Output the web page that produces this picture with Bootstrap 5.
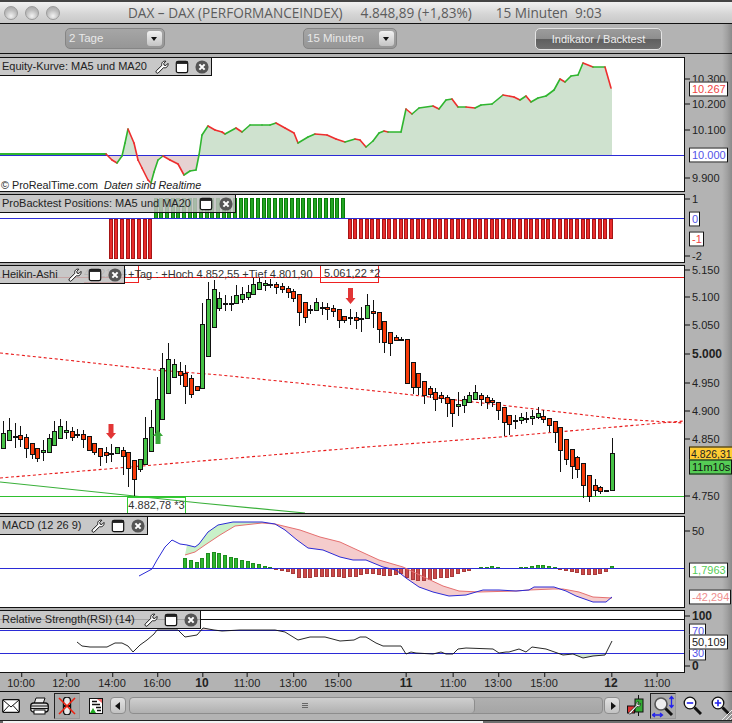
<!DOCTYPE html>
<html lang="de">
<head>
<meta charset="utf-8">
<title>DAX</title>
<link href="https://cdn.jsdelivr.net/npm/bootstrap@5.3.0/dist/css/bootstrap.min.css" rel="stylesheet">
<style>
html,body{margin:0;height:723px;overflow:hidden;background:#b3b3b3;font-family:"Liberation Sans",Arial,sans-serif;color:#222}
.app-window{width:732px;height:723px;background:linear-gradient(90deg,#b3b3b3 0,#b3b3b3 722px,#a2a2a2 727px,#8a8a8a 732px)}
.title-strip{height:24px;border-top:2px solid #444;border-bottom:1px solid #111;background:linear-gradient(#f1f1f1,#d4d4d4 60%,#c8c8c8);flex:none;position:relative}
.lights{position:absolute;left:4px;top:4px;gap:7px}
.light{width:14px;height:14px;border-radius:50%;border:1px solid #9b9b9b;background:radial-gradient(circle at 50% 75%,#f2f2f2,#bdbdbd 55%,#a3a3a3)}
.title-text{padding-left:128px;font:13.6px/21px "Open Sans",sans-serif;color:#5c5c5c;white-space:nowrap}
.title-gap-a{margin-left:18px}.title-gap-b{margin-left:24px}.title-gap-c{margin-left:7px}
.top-bar{height:30px;flex:none;border-bottom:1px solid #111;position:relative;margin-bottom:3px}
.drop{position:absolute;top:4px;height:21px;border:1px solid #858585;border-radius:5px;background:linear-gradient(#a6a6a6,#969696);color:#e8e8e8;font-size:11.5px;line-height:19px;padding-left:3px}
.drop-a{left:65px;width:100px}
.drop-b{left:303px;width:94px}
.drop-btn{position:absolute;right:2px;top:2px;width:15px;height:15px;border-radius:3px;background:linear-gradient(#f2f2f2,#c4c4c4)}
.drop-btn::after{content:"";position:absolute;left:4px;top:6px;border:3px solid transparent;border-top:4px solid #111;border-bottom:0}
.run-btn{position:absolute;left:535px;top:4px;width:127px;height:22px;padding:0;border:1px solid #e4e4e4;border-radius:5px;background:linear-gradient(#9c9c9c 0,#8e8e8e 50%,#5f5f5f 52%,#6f6f6f);color:#eee;font-size:11px;line-height:18px}
.run-btn:hover{background:#777;color:#fff;border-color:#e4e4e4}
.pane{flex:none;margin-bottom:2px}
.pane-a{height:135px}.pane-b{height:69px}.pane-c{height:249px}.pane-d{height:92px}.pane-e{height:63px}
.plot{width:685px;height:100%;position:relative;background:#fff;border:1px solid #111;border-left:0;overflow:hidden;flex:none}
.plot svg{display:block;width:684px;height:100%}
.scale-col{width:47px;position:relative;flex:none}
.tick,.tag{position:absolute;white-space:nowrap;transform:translateY(-50%);font-size:11px;line-height:13px}
.tick{left:7px;color:#222}
.tick::before{content:"";position:absolute;left:-7px;top:6px;width:5px;height:1px;background:#111}
.tick-strong{font-weight:700;font-size:12px}
.tag{left:4px;background:#fff;border:1px solid #111;padding:0 1px 0 2px;height:15px}
.tag-blue{color:#5353e8}.tag-red{color:#f04545}.tag-green{color:#55cc55}.tag-pink{color:#ef8f8f}
.tag-gold{background:#ffcc33;color:#222;padding:0 0 0 1px;font-size:10.4px;width:44px}.tag-time{background:#55cc55;color:#111}
.head{position:absolute;left:0;top:0;height:18px;border:1px solid #111;border-left:0;border-top:0;background:rgba(190,190,190,.85);font-size:11px;line-height:17px;padding:0 2px;gap:6px;z-index:3;white-space:nowrap;color:#222}
.head svg{width:14px;height:14px;flex:none}
.head-txt{flex:1}
.head-a{width:212px}.head-b{width:236px}.head-c{width:125px}.head-d{width:148px}.head-e{width:201px}
.note{position:absolute;font-size:11px;line-height:14px;white-space:nowrap;color:#333}
.copy-note{left:1px;top:120px;font-size:10.8px;color:#222}
.copy-note i{margin-left:3px}
.ha-box{position:absolute;top:-1px;height:18px;border:1px solid #e22;border-top:0;font-size:11px;line-height:16px;white-space:nowrap;color:#333;padding-left:3px}
.ha-box-a{left:84px;width:55px;border-left:0;padding:0;overflow:hidden;color:#888}
.ha-box-b{left:320px;width:59px}
.ha-stats{left:128px;top:1px}
.low-box{position:absolute;left:127px;top:231px;width:59px;height:17px;border:1px solid #3c3;border-bottom:0;font-size:11px;line-height:15px;text-align:center;white-space:nowrap;color:#333}
.time-axis{height:18px;flex:none;position:relative;border-bottom:1px solid #111;margin-top:-2px;box-sizing:content-box}
.when{position:absolute;top:3px;transform:translateX(-50%);font-size:11px;line-height:14px;color:#222}
.when::before{content:"";position:absolute;left:50%;top:-3px;width:1px;height:4px;background:#111}
.when-strong{font-weight:700;font-size:12px}
.bottom-bar{height:29px;flex:none;position:relative;border-bottom:1px solid #222;gap:0}
.bar-ico{position:absolute;top:4px}
.bar-sel{position:absolute;top:1px;width:26px;height:26px;background:#aaa;border:1px solid #999;border-top-color:#222;border-left-color:#222;padding:3px}
.scroll-btn{position:absolute;top:5px;width:16px;height:17px;border:1px solid #8d8d8d;border-radius:4px;background:linear-gradient(#e2e2e2,#c2c2c2)}
.scroll-btn::after{content:"";position:absolute;top:4px;left:4px;border:4px solid transparent}
.scroll-l{left:110px}.scroll-l::after{border-right:5px solid #111;border-left:0}
.scroll-r{left:604px}.scroll-r::after{border-left:5px solid #111;border-right:0;left:6px}
.track{position:absolute;left:129px;top:5px;width:474px;height:17px;border:1px solid #8d8d8d;border-radius:4px;background:linear-gradient(#b0b0b0,#a5a5a5)}
.thumb{height:100%;width:73%;border-right:1px solid #8d8d8d;border-radius:4px;background:linear-gradient(#cfcfcf,#b0b0b0);position:relative}
.thumb::after{content:"";position:absolute;left:172px;top:5px;width:6px;height:5px;border-top:1px solid #666;border-bottom:1px solid #666;background:linear-gradient(transparent 40%,#666 40%,#666 60%,transparent 60%)}
.foot-strip{height:3px;flex:none;background:linear-gradient(90deg,#666 0,#666 3px,#f2f2f2 3px,#f2f2f2 483px,#6e6e6e 483px)}
</style>
</head>
<body>
<svg width="0" height="0" class="position-absolute">
  <symbol id="ico-wrench" viewBox="0 0 16 16"><path d="M1.3 12.6 7.8 6.2C7 3.2 9.2.7 12.4 1.4L10 3.9l.4 2 2 .4 2.4-2.4c.8 3.2-2 5.8-5 4.8l-6.2 6.2c-.9.9-3.2-.7-2.3-2.3Z" fill="#fff" stroke="#111" stroke-width="1.1"/></symbol>
  <symbol id="ico-win" viewBox="0 0 16 16"><rect x="1.5" y="1.5" width="13" height="13" rx="2" fill="#fff" stroke="#111" stroke-width="1.4"/><rect x="1.5" y="1.5" width="13" height="3" fill="#222"/></symbol>
  <symbol id="ico-close" viewBox="0 0 16 16"><circle cx="8" cy="8" r="7.5" fill="#555"/><path d="M5 5l6 6M11 5l-6 6" stroke="#fff" stroke-width="2.4"/></symbol>
</svg>
<div class="app-window d-flex flex-column">
  <div class="title-strip">
    <div class="lights d-flex"><span class="light"></span><span class="light"></span><span class="light"></span></div>
    <div class="title-text"><span>DAX – DAX (PERFORMANCEINDEX)</span><span class="title-gap-a">4.848,89 (+1,83%)</span><span class="title-gap-b">15 Minuten</span><span class="title-gap-c">9:03</span></div>
  </div>
  <div class="top-bar">
    <div class="drop drop-a">2 Tage<span class="drop-btn"></span></div>
    <div class="drop drop-b">15 Minuten<span class="drop-btn"></span></div>
    <button type="button" class="btn run-btn">Indikator / Backtest</button>
  </div>

  <div class="pane pane-a d-flex">
    <div class="plot">
      <svg id="chart-eq" viewBox="0 58 684 133" preserveAspectRatio="none"></svg>
      <div class="head head-a d-flex align-items-center"><span class="head-txt">Equity-Kurve: MA5 und MA20</span><svg><use href="#ico-wrench"/></svg><svg><use href="#ico-win"/></svg><svg><use href="#ico-close"/></svg></div>
      <div class="note copy-note">© ProRealTime.com <i>Daten sind Realtime</i></div>
    </div>
    <div class="scale-col">
      <span class="tick" style="top:22px">10.300</span>
      <span class="tick" style="top:47px">10.200</span>
      <span class="tick" style="top:73px">10.100</span>
      <span class="tick" style="top:121px">9.900</span>
      <span class="tag tag-red" style="top:32px">10.267</span>
      <span class="tag tag-blue" style="top:98px">10.000</span>
    </div>
  </div>

  <div class="pane pane-b d-flex">
    <div class="plot">
      <svg id="chart-pos" viewBox="0 195 684 67" preserveAspectRatio="none"></svg>
      <div class="head head-b d-flex align-items-center"><span class="head-txt">ProBacktest Positions: MA5 und MA20</span><svg><use href="#ico-win"/></svg><svg><use href="#ico-close"/></svg></div>
    </div>
    <div class="scale-col">
      <span class="tick" style="top:5px">1</span>
      <span class="tick" style="top:62px">-2</span>
      <span class="tag tag-blue" style="top:25px">0</span>
      <span class="tag tag-red" style="top:45px">-1</span>
    </div>
  </div>

  <div class="pane pane-c d-flex">
    <div class="plot">
      <svg id="chart-ha" viewBox="0 266 684 247" preserveAspectRatio="none"></svg>
      <div class="ha-box ha-box-a">4.921,04</div>
      <div class="note ha-stats">+Tag : +Hoch 4.852,55 +Tief 4.801,90</div>
      <div class="ha-box ha-box-b">5.061,22 *2</div>
      <div class="low-box">4.882,78 *3</div>
      <div class="head head-c d-flex align-items-center"><span class="head-txt">Heikin-Ashi</span><svg><use href="#ico-wrench"/></svg><svg><use href="#ico-win"/></svg><svg><use href="#ico-close"/></svg></div>
    </div>
    <div class="scale-col">
      <span class="tick" style="top:5px">5.150</span>
      <span class="tick" style="top:32px">5.100</span>
      <span class="tick" style="top:60px">5.050</span>
      <span class="tick tick-strong" style="top:89px">5.000</span>
      <span class="tick" style="top:118px">4.950</span>
      <span class="tick" style="top:146px">4.900</span>
      <span class="tick" style="top:174px">4.850</span>
      <span class="tick" style="top:231px">4.750</span>
      <span class="tag tag-gold" style="top:189px">4.826,31</span>
      <span class="tag tag-time" style="top:202px">11m10s</span>
    </div>
  </div>

  <div class="pane pane-d d-flex">
    <div class="plot">
      <svg id="chart-macd" viewBox="0 517 684 90" preserveAspectRatio="none"></svg>
      <div class="head head-d d-flex align-items-center"><span class="head-txt">MACD (12 26 9)</span><svg><use href="#ico-wrench"/></svg><svg><use href="#ico-win"/></svg><svg><use href="#ico-close"/></svg></div>
    </div>
    <div class="scale-col">
      <span class="tick" style="top:15px">50</span>
      <span class="tag tag-green" style="top:54px">1,7963</span>
      <span class="tag tag-pink" style="top:81px">-42,294</span>
    </div>
  </div>

  <div class="pane pane-e d-flex">
    <div class="plot">
      <svg id="chart-rsi" viewBox="0 611 684 61" preserveAspectRatio="none"></svg>
      <div class="head head-e d-flex align-items-center"><span class="head-txt">Relative Strength(RSI) (14)</span><svg><use href="#ico-wrench"/></svg><svg><use href="#ico-win"/></svg><svg><use href="#ico-close"/></svg></div>
    </div>
    <div class="scale-col">
      <span class="tick tick-strong" style="top:6px">100</span>
      <span class="tick tick-strong" style="top:56px">0</span>
      <span class="tag tag-blue" style="top:21px">70</span>
      <span class="tag tag-blue" style="top:43px">30</span>
      <span class="tag" style="top:32px">50,109</span>
    </div>
  </div>

  <div class="time-axis">
    <span class="when" style="left:21px">10:00</span>
    <span class="when" style="left:66px">12:00</span>
    <span class="when" style="left:112px">14:00</span>
    <span class="when" style="left:157px">16:00</span>
    <span class="when when-strong" style="left:202px">10</span>
    <span class="when" style="left:247px">11:00</span>
    <span class="when" style="left:293px">13:00</span>
    <span class="when" style="left:338px">15:00</span>
    <span class="when when-strong" style="left:406px">11</span>
    <span class="when" style="left:453px">11:00</span>
    <span class="when" style="left:498px">13:00</span>
    <span class="when" style="left:544px">15:00</span>
    <span class="when when-strong" style="left:611px">12</span>
    <span class="when" style="left:657px">11:00</span>
  </div>

  <div class="bottom-bar">
    <svg class="bar-ico" style="left:2px;top:7px" width="18" height="14" viewBox="0 0 18 14"><rect x=".7" y=".7" width="16.6" height="12.6" rx="1" fill="#fff" stroke="#111" stroke-width="1.3"/><path d="M1 1l8 7 8-7M1 13l6-6.5M17 13l-6-6.5" fill="none" stroke="#111"/></svg>
    <svg class="bar-ico" style="left:30px;top:5px" width="19" height="18" viewBox="0 0 19 18"><path d="M6 1h9l-2 6H4Z" fill="#eee" stroke="#111"/><rect x=".7" y="6" width="17.6" height="9" rx="3" fill="#ddd" stroke="#111" stroke-width="1.3"/><path d="M1 9h17M1 11.5h17" stroke="#111"/><rect x="4" y="13" width="11" height="4" fill="#fff" stroke="#111"/></svg>
    <div class="bar-sel" style="left:54px"><svg width="18" height="18" viewBox="0 0 18 18" class="d-block"><rect x="5.5" y="0" width="7" height="18" rx="3.5" fill="#e8e8e8" stroke="#111" stroke-width="1.4"/><path d="M5.5 9h7" stroke="#111" stroke-width="2"/><path d="M1 1l16 16M17 1 1 17" stroke="#e21" stroke-width="1.6"/></svg></div>
    <svg class="bar-ico" style="left:89px;top:6px" width="14" height="16" viewBox="0 0 14 16"><rect x=".5" y=".5" width="13" height="15" fill="#fff" stroke="#111"/><path d="M8 1h5v4Z" fill="#e66"/><path d="M1 15l3-5 3 5Z" fill="#2a2"/><path d="M3 3.5h5M3 6.5h8M7 9.5h5M8 12.5h4" stroke="#111" stroke-width="1.4"/></svg>
    <div class="scroll-btn scroll-l"></div>
    <div class="track"><div class="thumb"></div></div>
    <div class="scroll-btn scroll-r"></div>
    <svg class="bar-ico" style="left:627px;top:3px" width="17" height="21" viewBox="0 0 17 21"><path d="M11.5 0v21" stroke="#111"/><rect x="8" y="4" width="8" height="13" fill="#3a3" stroke="#111"/><rect x=".5" y="11" width="7" height="7" fill="#d33" stroke="#111"/><path d="M1.5 18 9 10.5c-.7-2 .8-4 3-3.5l-1.5 2 1 1 2-1.500c.4 2.200-1.500 3.800-3.500 3L4 18.500c-.8.800-3 .500-2.500-.5Z" fill="#fff" stroke="#111" stroke-width=".7"/></svg>
    <div class="bar-sel" style="left:650px;padding:1px"><svg width="24" height="24" viewBox="0 0 24 24" class="d-block"><circle cx="9" cy="9" r="6" fill="#eee" stroke="#555" stroke-width="1.6"/><path d="M13.500 13.500 20 20" stroke="#111" stroke-width="3"/><path d="M19.500 2v10M17.500 4l2-2.500 2 2.500M17.500 10l2 2.500 2-2.500M1 20h9M3 18l-2.500 2L3 22M8 18l2.500 2L8 22" fill="none" stroke="#22e" stroke-width="1.300"/></svg></div>
    <svg class="bar-ico" style="left:683px;top:4px" width="19" height="20" viewBox="0 0 19 20"><circle cx="7" cy="7" r="5.800" fill="#fff" stroke="#111" stroke-width="1.300"/><path d="M3.800 7h6.400" stroke="#22e" stroke-width="1.600"/><path d="M11.500 11.500 18 18" stroke="#111" stroke-width="3"/></svg>
    <svg class="bar-ico" style="left:711px;top:4px" width="19" height="20" viewBox="0 0 19 20"><circle cx="7" cy="7" r="5.800" fill="#fff" stroke="#111" stroke-width="1.300"/><path d="M3.800 7h6.400M7 3.800v6.400" stroke="#22e" stroke-width="1.600"/><path d="M11.500 11.500 18 18" stroke="#111" stroke-width="3"/></svg>
    <svg class="bar-ico" style="left:722px;top:18px" width="10" height="10" viewBox="0 0 10 10"><path d="M0 10 10 0M4 10l6-6M8 10l2-2" stroke="#eee" stroke-width="1"/></svg>
  </div>
  <div class="foot-strip"></div>
</div>

<script src="https://cdn.jsdelivr.net/npm/bootstrap@5.3.0/dist/js/bootstrap.bundle.min.js"></script>
<script>
var X=function(i){return 3.3+5.685*i};
var pts=function(a){return a.map(function(p){return p.join(',')}).join(' ')};
var BLUE='#2b2bd6',GRN='#2fb52f',RED='#ee2e2e';

/* equity curve */
var eq=[[0,154],[106,154],[112,160],[117,163],[122,156],[125,143],[128,129],[134,143],[138,160],[142,168],[148,180],[151,183],[154,172],[158,160],[163,156],[170,160],[178,164],[184,175],[190,171],[196,170],[199,155],[202,135],[208,126],[215,130],[222,132],[225,134],[236,128],[242,132],[250,125],[262,125],[270,125],[276,123],[285,128],[294,133],[298,143],[308,137],[315,134],[327,135],[336,139],[345,142],[355,139],[360,140],[366,147],[373,141],[379,133],[384,131],[388,132],[401,132],[406,109],[412,114],[419,108],[433,106],[439,109],[446,100],[452,99],[458,107],[466,107],[475,108],[481,105],[492,104],[503,95],[514,97],[520,100],[526,96],[531,102],[538,98],[546,96],[554,90],[560,79],[565,82],[571,76],[578,75],[583,63],[593,67],[605,67],[611,88]];
var s='<defs><clipPath id="abv"><rect x="0" y="58" width="684" height="97"/></clipPath><clipPath id="blw"><rect x="0" y="155" width="684" height="40"/></clipPath></defs>';
var area2=pts(eq.concat([[612,88],[612,155],[0,155]]));
s+='<polygon points="'+area2+'" fill="#cfe2cf" clip-path="url(#abv)"/><polygon points="'+area2+'" fill="#e6d2d2" clip-path="url(#blw)"/>';
s+='<line x1="0" x2="684" y1="155.500" y2="155.500" stroke="'+BLUE+'"/>';
for(var i=1;i<eq.length;i++){var a=eq[i-1],b=eq[i];var col=b[1]>a[1]?RED:GRN;
 s+='<line x1="'+a[0]+'" y1="'+a[1]+'" x2="'+b[0]+'" y2="'+b[1]+'" stroke="'+col+'" stroke-width="'+(i<2?2:1.6)+'" stroke-linecap="round"/>'}
document.getElementById('chart-eq').innerHTML=s;

/* positions */
s='';
var bar=function(x,y,h,f,st){return '<rect x="'+(Math.floor(x)+.5)+'" y="'+y+'" width="3" height="'+h+'" fill="'+f+'" stroke="'+st+'" shape-rendering="crispEdges"/>'};
for(i=0;i<8;i++)s+=bar(109+i*5.685,219,39,'#e82c2c','#a51515');
for(i=0;i<34;i++)s+=bar(154+i*5.685,198,20,'#22a522','#0a7a0a');
for(i=0;i<47;i++)s+=bar(348+i*5.685,219,19,'#e82c2c','#a51515');
s+='<line x1="0" x2="684" y1="218.500" y2="218.500" stroke="'+BLUE+'"/>';
document.getElementById('chart-pos').innerHTML=s;

/* heikin ashi */
var c=[[421,448,433,448,'g'],[418,440,430,440,'g'],[423,448,436,436,'d'],[426,447,435,439,'r'],[434,458,437,448,'r'],[443,459,443,454,'r'],[448,462,448,458,'r'],[440,461,450,452,'g'],[434,452,438,452,'g'],[421,445,431,445,'g'],[419,438,426,438,'g'],[421,439,430,432,'g'],[427,441,431,437,'r'],[429,438,434,434,'d'],[430,448,434,439,'r'],[436,450,436,450,'r'],[443,455,443,452,'r'],[448,466,448,456,'r'],[447,463,452,455,'r'],[444,462,453,453,'d'],[447,453,447,453,'g'],[447,475,450,456,'r'],[452,487,452,468,'r'],[460,496,460,479,'r'],[459,472,459,469,'g'],[417,464,438,464,'g'],[410,451,427,451,'g'],[377,433,399,433,'g'],[353,419,368,419,'g'],[343,393,359,393,'g'],[359,377,364,377,'g'],[362,385,371,375,'r'],[365,404,373,386,'r'],[375,398,378,394,'r'],[386,390,386,390,'r'],[303,388,324,388,'g'],[282,356,299,356,'g'],[280,327,289,327,'g'],[292,311,298,308,'g'],[295,311,303,303,'d'],[296,311,303,303,'d'],[285,303,295,303,'g'],[287,303,294,299,'g'],[285,300,292,297,'g'],[278,294,284,294,'g'],[278,289,282,289,'g'],[280,291,283,285,'g'],[279,288,284,284,'d'],[282,294,284,287,'r'],[283,293,286,289,'r'],[286,298,288,292,'r'],[289,302,291,298,'r'],[294,326,294,312,'r'],[302,323,302,317,'r'],[305,314,309,309,'d'],[298,310,302,310,'g'],[302,315,307,307,'d'],[303,320,307,309,'r'],[305,317,308,311,'r'],[309,328,309,320,'r'],[316,323,316,320,'r'],[309,325,317,317,'d'],[312,329,317,320,'r'],[307,332,318,318,'d'],[294,318,305,318,'g'],[300,328,311,313,'r'],[312,343,312,329,'r'],[321,353,321,342,'r'],[332,356,332,343,'r'],[335,340,337,340,'r'],[337,341,339,339,'d'],[339,383,339,383,'r'],[362,394,362,387,'r'],[373,395,373,387,'r'],[381,404,381,395,'r'],[386,398,388,394,'r'],[388,411,392,399,'r'],[392,403,395,398,'r'],[395,417,397,403,'r'],[399,427,399,413,'r'],[392,416,404,406,'g'],[396,413,399,405,'g'],[392,402,395,402,'g'],[385,399,392,399,'g'],[393,406,395,399,'r'],[395,409,397,402,'r'],[398,407,400,402,'r'],[402,420,402,410,'r'],[407,436,407,422,'r'],[415,435,415,424,'r'],[415,429,420,420,'d'],[413,424,417,420,'g'],[412,423,418,418,'d'],[410,425,416,418,'g'],[407,419,413,417,'g'],[410,423,416,419,'r'],[418,432,418,425,'r'],[421,443,421,432,'r'],[427,472,427,450,'r'],[439,465,439,459,'r'],[449,479,449,466,'r'],[456,478,457,469,'r'],[463,498,463,485,'r'],[475,502,475,496,'r'],[479,496,485,490,'r'],[486,494,487,491,'r'],[490,490,490,490,'d'],[438,490,453,490,'g']];
s='';
var dash=function(p){return '<polyline points="'+pts(p)+'" fill="none" stroke="#e81818" stroke-width="1.100" stroke-dasharray="3 2.500"/>'};
s+='<line x1="0" x2="684" y1="277.500" y2="277.500" stroke="#e81818"/>';
s+=dash([[0,353],[66,360],[156,370],[220,375],[366,390],[395,393],[500,405],[620,419],[684,423]]);
s+=dash([[0,478],[130,467],[366,447],[500,437],[684,421]]);
s+='<polyline points="0,482 125,495 200,503 305,513" fill="none" stroke="#3ab03a" stroke-width="1.100"/>';
s+='<line x1="0" x2="684" y1="496.500" y2="496.500" stroke="#2fc02f"/>';
c.forEach(function(d,i){var x=Math.round(X(i))+.5;
 s+='<line x1="'+x+'" x2="'+x+'" y1="'+d[0]+'" y2="'+d[1]+'" stroke="#111" shape-rendering="crispEdges"/>';
 if(d[4]=='d')s+='<rect x="'+(x-2.5)+'" y="'+(d[2]-.5)+'" width="5" height="2" fill="#111" shape-rendering="crispEdges"/>';
 else s+='<rect x="'+(x-2)+'" y="'+(d[2]+.5)+'" width="4" height="'+(d[3]-d[2])+'" fill="'+(d[4]=='g'?'#46c246':'#f83a08')+'" stroke="#111" shape-rendering="crispEdges"/>';
});
var arrow=function(x,t,b,col,up){var h=up?t+6:b-6;return '<polygon points="'+(up?[[x,t],[x+5,h],[x+2.500,h],[x+2.500,b],[x-2.500,b],[x-2.500,h],[x-5,h]]:[[x,b],[x+5,h],[x+2.500,h],[x+2.500,t],[x-2.500,t],[x-2.500,h],[x-5,h]]).join(' ')+'" fill="'+col+'"/>'};
s+=arrow(350.500,288,304,'#e23535');
s+=arrow(111,424,439,'#e23535');
s+=arrow(158,430,444,'#38a838',true);
document.getElementById('chart-ha').innerHTML=s;

/* macd */
var blue=[[139,576],[152,569],[157,560],[165,547],[172,540],[180,544],[187,545],[195,547],[199,544],[208,532],[218,525],[233,522],[262,522],[275,524],[285,530],[297,540],[308,548],[323,550],[340,557],[353,560],[366,560],[383,567],[396,570],[406,578],[419,587],[433,592],[449,596],[466,595],[476,592],[483,590],[499,590],[516,591],[529,590],[534,587],[554,587],[566,591],[576,596],[593,602],[606,602],[612,597]];
var sig=[[185,555],[195,552],[205,545],[220,535],[235,526],[262,523],[275,524],[300,530],[320,537],[340,542],[366,554],[379,560],[403,567],[426,578],[443,586],[459,591],[479,592],[516,591],[529,590],[553,589],[563,589],[579,592],[593,597],[612,598]];
s='';
s+='<polygon points="'+pts(blue.slice(6,14).concat(sig.slice(0,7).reverse()))+'" fill="#c9f1c9"/>';
s+='<polygon points="'+pts(blue.slice(13,40).concat(sig.slice(6).reverse()))+'" fill="#f5cccc"/>';
var hist=[10,8,6,10,15,16,15,13,11,10,8,7,5,4,2,1,-.5,-2,-3,-5,-9,-9,-9,-8,-8,-8,-8,-8,-9,-8,-8,-6,-5,-5,-6,-7,-7,-6,-5,-9,-11,-12,-12,-11,-10,-9,-9,-8,-5,-3,-2,0,1,1,2,1,0,0,0,1,1,2,3,3,2,1,-1,-2,-3,-4,-6,-6,-6,-5,-3,2];
hist.forEach(function(v,k){if(!v)return;var x=Math.round(X(k+32));
 s+= v>0 ? '<rect x="'+(x-1.5)+'" y="'+(568-v+.5)+'" width="3" height="'+v+'" fill="#2db52d" stroke="#1e8c1e" shape-rendering="crispEdges"/>'
         : '<rect x="'+(x-1.5)+'" y="568.500" width="3" height="'+(-v)+'" fill="#cc4a4a" stroke="#a83a3a" shape-rendering="crispEdges"/>';});
s+='<line x1="0" x2="684" y1="568.500" y2="568.500" stroke="'+BLUE+'" stroke-width="1.100"/>';
s+='<polyline points="'+pts(sig)+'" fill="none" stroke="#e57070"/>';
s+='<polyline points="'+pts(blue)+'" fill="none" stroke="#2b2bd6"/>';
document.getElementById('chart-macd').innerHTML=s;

/* rsi */
var rsi=[[77,642],[82,646],[90,647],[100,647],[107,647],[115,643],[122,643],[128,646],[133,652],[140,645],[147,640],[154,634],[157,630],[170,630],[178,630],[185,637],[197,635],[203,628],[214,630],[222,631],[240,630],[262,630],[275,630],[285,632],[298,640],[310,637],[325,637],[340,641],[354,640],[360,637],[366,637],[376,643],[383,646],[401,646],[406,654],[411,652],[416,653],[433,654],[441,652],[446,654],[453,654],[458,649],[466,648],[493,649],[499,653],[506,652],[509,652],[519,649],[526,652],[532,647],[546,649],[563,655],[573,654],[583,658],[593,656],[605,655],[612,641]];
s='<defs><clipPath id="rsiTop"><rect x="0" y="611" width="684" height="19.500"/></clipPath><clipPath id="rsiLow"><rect x="0" y="653.500" width="684" height="20"/></clipPath></defs>';
var rp=pts(rsi);
s+='<polygon points="'+rp+'" fill="#e6cfcf" clip-path="url(#rsiTop)"/><polygon points="'+rp+'" fill="#cfe2cf" clip-path="url(#rsiLow)"/>';
s+='<line x1="0" x2="684" y1="619.500" y2="619.500" stroke="#111"/>';
s+='<line x1="0" x2="684" y1="630.500" y2="630.500" stroke="'+BLUE+'"/><line x1="0" x2="684" y1="653.500" y2="653.500" stroke="'+BLUE+'"/>';
s+='<polyline points="'+rp+'" fill="none" stroke="#111" stroke-width=".9"/>';
document.getElementById('chart-rsi').innerHTML=s;
</script>
</body>
</html>
